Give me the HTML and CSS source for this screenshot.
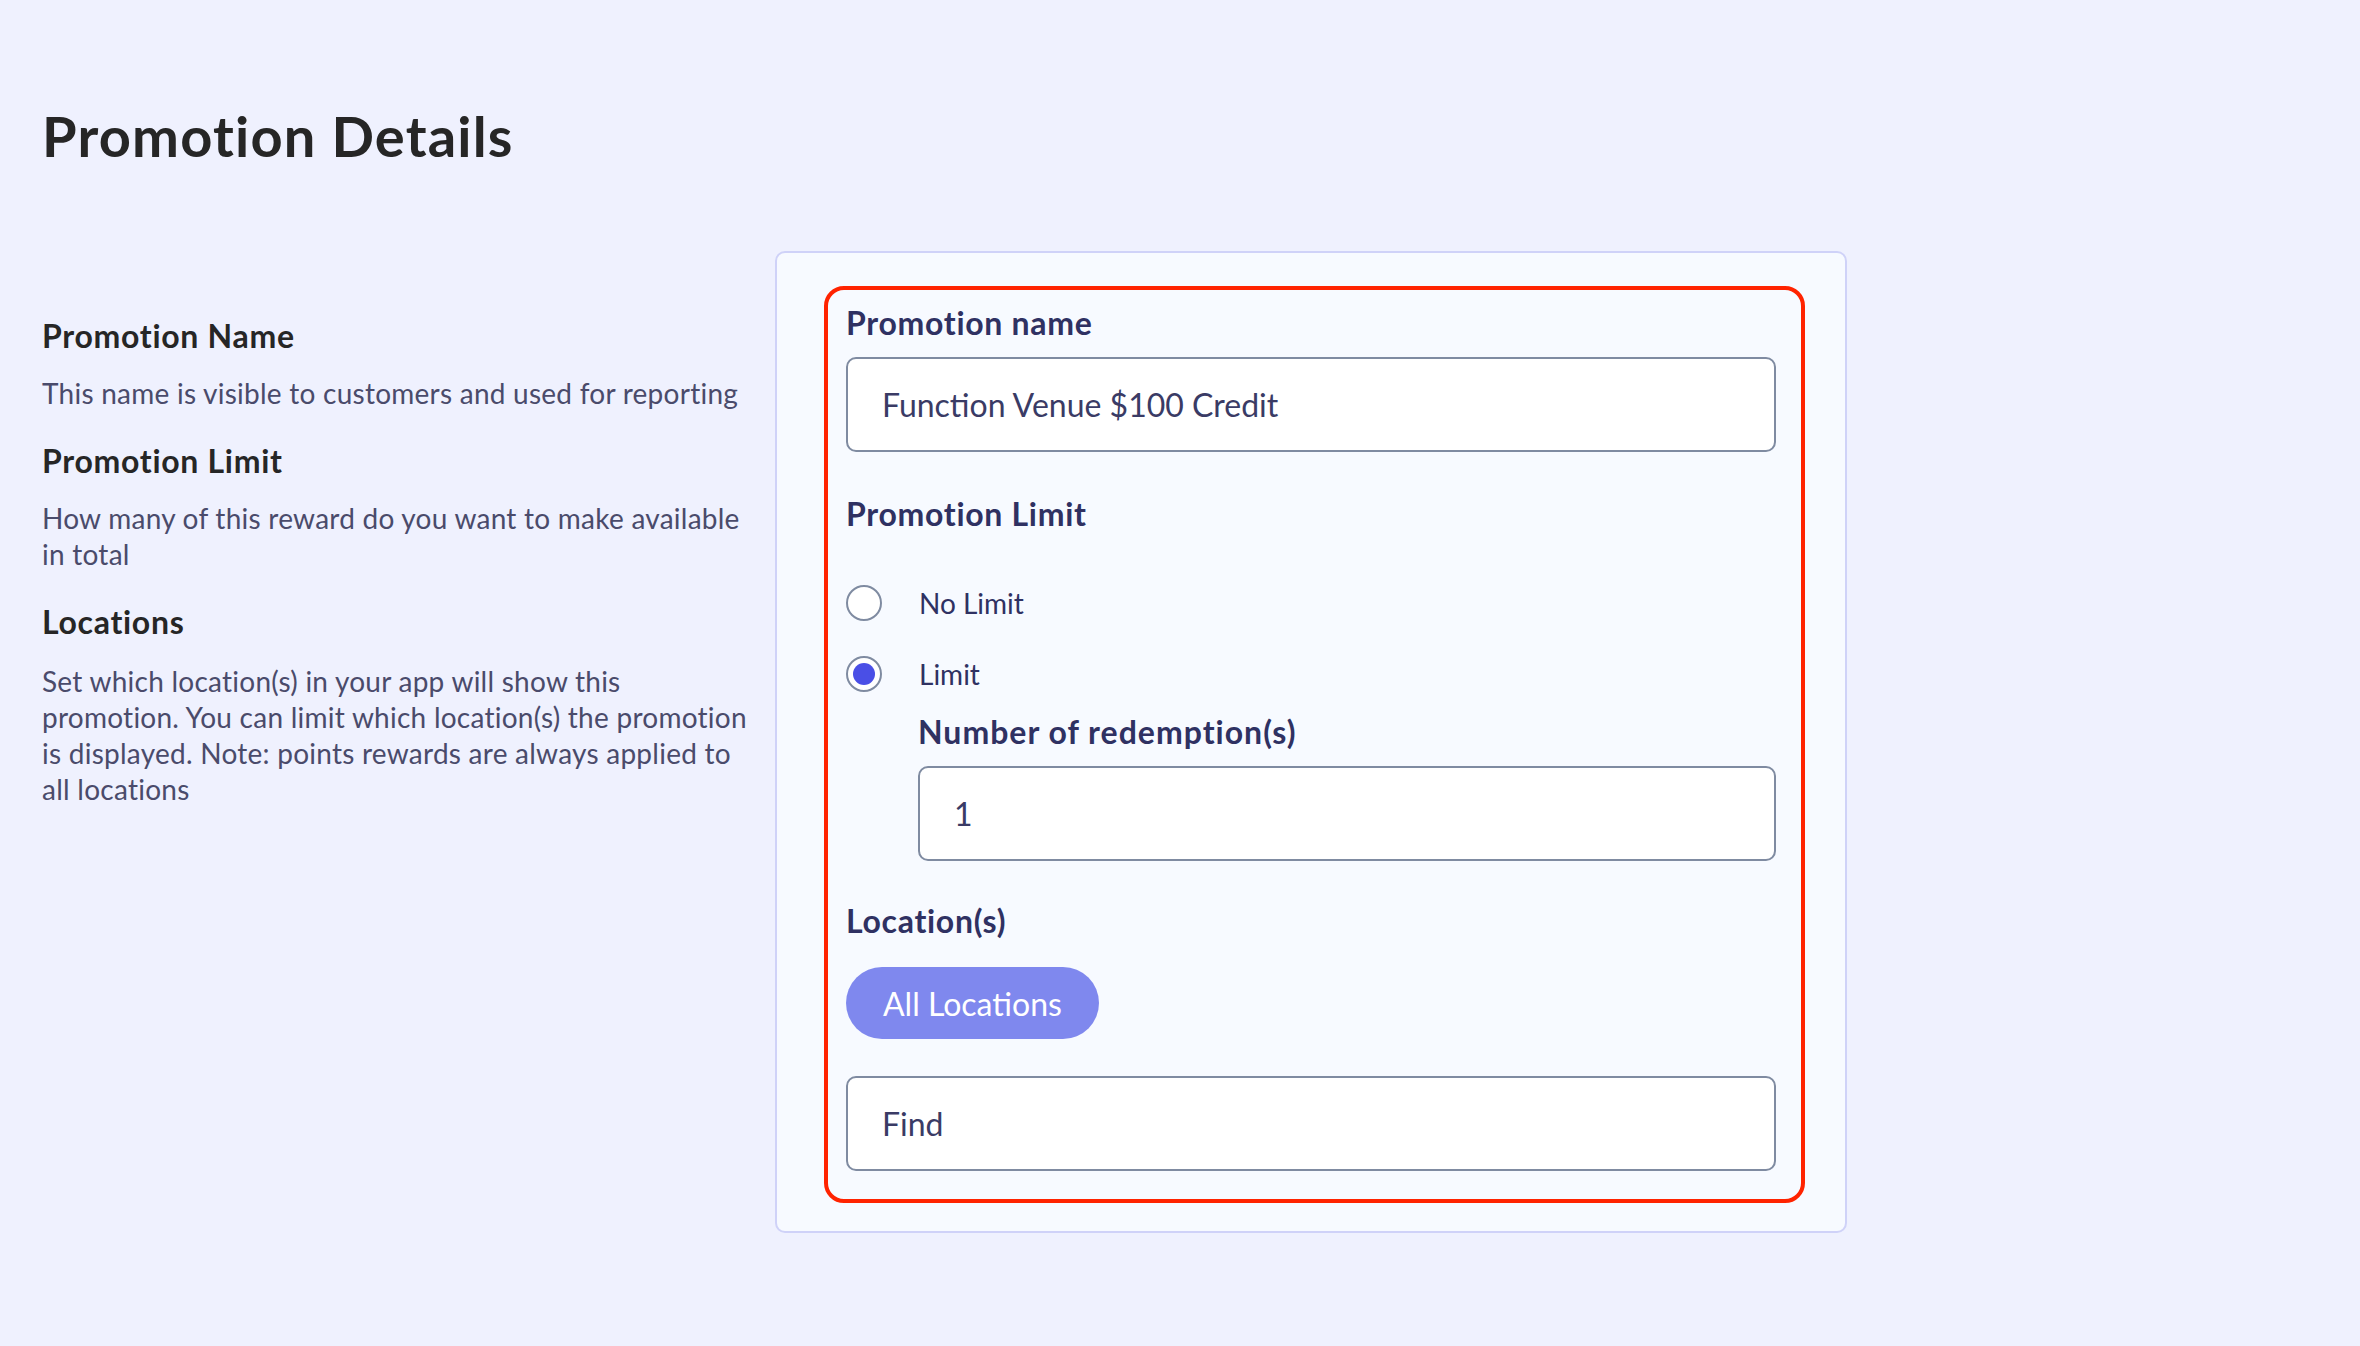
FILE: index.html
```html
<!DOCTYPE html>
<html lang="en">
<head>
    <meta charset="UTF-8">
    <meta name="viewport" content="width=device-width, initial-scale=1.0">
    <title>Promotion Details</title>
    <link rel="stylesheet" href="styles.css">
</head>
<body>
    <div class="page">
        <h1 class="page-title">Promotion Details</h1>

        <div class="details">
            <div class="help">
                <h3>Promotion Name</h3>
                <p>This name is visible to customers and used for reporting</p>

                <h3>Promotion Limit</h3>
                <p>How many of this reward do you want to make available in total</p>

                <h3>Locations</h3>
                <p>Set which location(s) in your app will show this promotion. You can limit which location(s) the promotion is displayed. Note: points rewards are always applied to all locations</p>
            </div>

            <div class="card">
                <div class="highlight">
                    <label class="field-label" for="promo-name">Promotion name</label>
                    <input class="text-input" id="promo-name" type="text" value="Function Venue $100 Credit">

                    <div class="field-label limit-label">Promotion Limit</div>

                    <label class="radio-row first">
                        <input type="radio" name="limit">
                        <span class="radio"></span>
                        <span>No Limit</span>
                    </label>
                    <label class="radio-row">
                        <input type="radio" name="limit" checked>
                        <span class="radio"></span>
                        <span>Limit</span>
                    </label>

                    <div class="sub-field">
                        <label class="field-label" for="redemptions">Number of redemption(s)</label>
                        <input class="text-input" id="redemptions" type="text" value="1">
                    </div>

                    <div class="field-label location-label">Location(s)</div>
                    <button class="pill">All Locations</button>
                    <input class="text-input find" type="text" placeholder="Find">
                </div>
            </div>
        </div>
    </div>
</body>
</html>
```

FILE: styles.css
```css
body {
    margin: 0;
    background: #eff1fe;
    font-family: Lato, "Open Sans", sans-serif;
    color: #262626;
}
.page {
    padding: 102px 42px 0 42px;
}
.page-title {
    margin: 0;
    font-size: 56px;
    line-height: 68px;
    font-weight: 700;
    letter-spacing: 1.2px;
    color: #262626;
}
.details {
    display: grid;
    grid-template-columns: 708px 1072px;
    column-gap: 25px;
    margin-top: 81px;
    align-items: start;
}

/* left column */
.help {
    padding-top: 67px;
}
.help h3 {
    margin: 0 0 21px 0;
    font-size: 32px;
    line-height: 36px;
    font-weight: 700;
    letter-spacing: 0.7px;
    color: #262626;
}
.help p {
    margin: 0 0 32px 0;
    font-size: 28px;
    line-height: 36px;
    letter-spacing: 0.25px;
    color: #4a4b6b;
}
.help p:last-child {
    margin-top: 23px;
}

/* form card */
.card {
    background: #f7faff;
    border: 2px solid #cfd2f8;
    border-radius: 10px;
    padding: 33px 40px 28px 47px;
}
.highlight {
    border: 4px solid #ff2300;
    border-radius: 20px;
    padding: 15px 25px 28px 18px;
    display: flex;
    flex-direction: column;
    align-items: flex-start;
}
.field-label {
    display: block;
    font-size: 32px;
    line-height: 36px;
    font-weight: 700;
    letter-spacing: 0.7px;
    color: #2f3162;
    margin-bottom: 16px;
}
.sub-field .field-label {
    letter-spacing: 1px;
}
.text-input {
    box-sizing: border-box;
    width: 100%;
    height: 95px;
    border: 2px solid #7f8ba1;
    border-radius: 10px;
    background: #fff;
    padding: 0 34px;
    font-family: Lato, "Open Sans", sans-serif;
    font-size: 32px;
    color: #3a3b65;
    outline: none;
}
.text-input::placeholder {
    color: #3a3b65;
}
.limit-label {
    margin-top: 44px;
    margin-bottom: 53px;
}
.radio-row {
    display: flex;
    align-items: center;
    gap: 37px;
    font-size: 28px;
    color: #2f3162;
    margin-top: 35px;
    cursor: pointer;
}
.radio-row.first {
    margin-top: 0;
}
.radio-row input {
    display: none;
}
.radio {
    box-sizing: border-box;
    width: 36px;
    height: 36px;
    border: 2px solid #7f8ba1;
    border-radius: 50%;
    background: #fff;
    display: flex;
    align-items: center;
    justify-content: center;
}
.radio-row input:checked + .radio::after {
    content: "";
    width: 22px;
    height: 22px;
    border-radius: 50%;
    background: #4a4fe6;
}
.sub-field {
    align-self: stretch;
    margin: 22px 0 0 72px;
}
.location-label {
    margin-top: 42px;
    margin-bottom: 28px;
}
.pill {
    height: 72px;
    padding: 0 37px;
    border: none;
    border-radius: 36px;
    background: #7f88ee;
    color: #fff;
    font-family: Lato, "Open Sans", sans-serif;
    font-size: 32px;
    cursor: pointer;
}
.find {
    margin-top: 37px;
}
```
